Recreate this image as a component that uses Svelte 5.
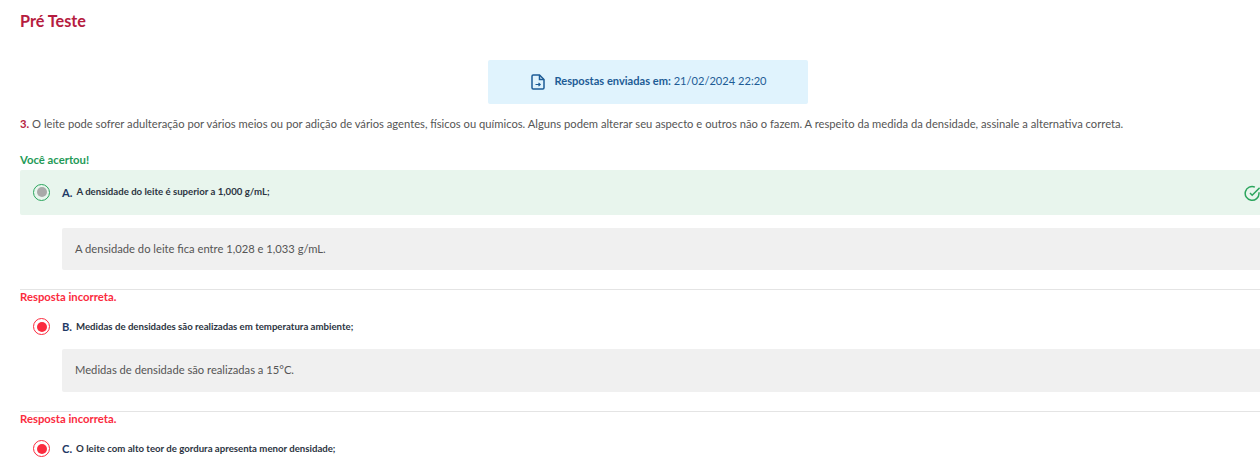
<script>
	const wrong = [
		{
			letter: 'B.',
			text: 'Medidas de densidades são realizadas em temperatura ambiente;',
			feedback: 'Medidas de densidade são realizadas a 15°C.'
		},
		{
			letter: 'C.',
			text: 'O leite com alto teor de gordura apresenta menor densidade;',
			feedback: null
		}
	];
</script>

<div class="page">
	<div class="content">
		<h1>Pré Teste</h1>

		<div class="sent-wrap">
			<div class="sent">
				<svg class="file-icon" width="14" height="16" viewBox="0 0 14 16" fill="none" stroke="#1d5c96" stroke-width="1.5">
					<path d="M8.5 1H2.2C1.5 1 1 1.5 1 2.2v11.6c0 .7.5 1.2 1.2 1.2h9.6c.7 0 1.2-.5 1.2-1.2V5.5z" />
					<path d="M8.5 1v4.5H13" />
					<path d="M4.5 10.5h4.5M7.5 8.8l1.7 1.7-1.7 1.7" stroke-width="1.2" />
				</svg>
				<span><strong>Respostas enviadas em:</strong> 21/02/2024 22:20</span>
			</div>
		</div>

		<p class="question">
			<strong>3.</strong> O leite pode sofrer adulteração por vários meios ou por adição de vários agentes, físicos ou químicos. Alguns podem alterar seu aspecto e outros não o fazem. A respeito da medida da densidade, assinale a alternativa correta.
		</p>

		<div class="status ok">Você acertou!</div>
		<div class="option correct">
			<span class="radio green"></span>
			<span class="letter">A.</span>
			<span class="text">A densidade do leite é superior a 1,000 g/mL;</span>
			<svg class="check" width="17" height="17" viewBox="0 0 17 17" fill="none" stroke="#2ba55d" stroke-width="1.5">
				<path d="M15 7.2v1.2a6.9 6.9 0 1 1-4.1-6.3" />
				<path d="M15.6 2.8 8.2 10.2 6 8" />
			</svg>
		</div>
		<div class="feedback first">A densidade do leite fica entre 1,028 e 1,033 g/mL.</div>

		{#each wrong as item}
			<div class="block">
				<div class="status bad">Resposta incorreta.</div>
				<div class="option">
					<span class="radio red"></span>
					<span class="letter">{item.letter}</span>
					<span class="text">{item.text}</span>
				</div>
				{#if item.feedback}
					<div class="feedback">{item.feedback}</div>
				{/if}
			</div>
		{/each}
	</div>
</div>

<style>
	:global(body) {
		margin: 0;
		background: #fff;
	}

	.page {
		height: 471px;
		overflow: hidden;
		font-family: Lato, 'Liberation Sans', sans-serif;
		color: #555;
	}

	.content {
		width: 1256px;
		margin-left: 20px;
	}

	h1 {
		margin: 0;
		padding-top: 11px;
		font-size: 16.2px;
		line-height: 19px;
		font-weight: 700;
		color: #b61c40;
	}

	.sent-wrap {
		display: flex;
		justify-content: center;
		margin-top: 30px;
	}

	.sent {
		box-sizing: border-box;
		width: 320px;
		height: 44px;
		padding-bottom: 3px;
		padding-left: 2px;
		display: flex;
		align-items: center;
		justify-content: center;
		gap: 9px;
		background: #e0f3fd;
		border-radius: 2px;
		font-size: 11.1px;
		color: #1d5c96;
	}

	.file-icon {
		margin-top: 3px;
	}

	.question {
		margin: 12px 0 0;
		font-size: 11.21px;
		line-height: 16px;
		color: #555;
		white-space: nowrap;
	}

	.question strong {
		color: #b61c40;
	}

	.status {
		font-size: 11.3px;
		font-weight: 700;
		line-height: 14px;
	}

	.status.ok {
		margin-top: 21px;
		color: #1f9a57;
	}

	.status.bad {
		color: #fb2b3e;
	}

	.option {
		display: flex;
		align-items: center;
		height: 45px;
		padding-left: 13px;
		position: relative;
	}

	.option.correct {
		box-sizing: border-box;
		margin-top: 3px;
		padding-bottom: 1px;
		background: #e8f5ed;
		border-radius: 2px;
	}

	.radio {
		box-sizing: border-box;
		width: 17px;
		height: 17px;
		border-radius: 50%;
		border: 1px solid;
		display: flex;
		align-items: center;
		justify-content: center;
		margin-right: 12px;
		flex-shrink: 0;
	}

	.radio::after {
		content: '';
		width: 10px;
		height: 10px;
		border-radius: 50%;
	}

	.radio.green {
		border-color: #2ba55d;
	}

	.radio.green::after {
		background: #a9a9a9;
	}

	.radio.red {
		border-color: #fb2b3e;
	}

	.radio.red::after {
		background: #fb2b3e;
	}

	.letter {
		font-size: 11.2px;
		font-weight: 700;
		color: #1f3a66;
		margin-right: 4px;
	}

	.text {
		font-size: 9.63px;
		font-weight: 700;
		color: #2c3442;
		position: relative;
		top: -1px;
	}

	.check {
		position: absolute;
		right: 15px;
		top: 15px;
	}

	.feedback {
		box-sizing: border-box;
		margin: 0 0 0 42px;
		height: 42px;
		padding-bottom: 2px;
		padding-left: 13px;
		display: flex;
		align-items: center;
		background: #f0f0f0;
		border-radius: 2px;
		font-size: 11.2px;
		color: #555;
	}

	.feedback.first {
		margin-top: 13px;
		margin-bottom: 19px;
	}

	.block {
		border-top: 1px solid #e4e4e4;
	}

	.block .feedback {
		height: 43px;
		margin-bottom: 19px;
	}
</style>
